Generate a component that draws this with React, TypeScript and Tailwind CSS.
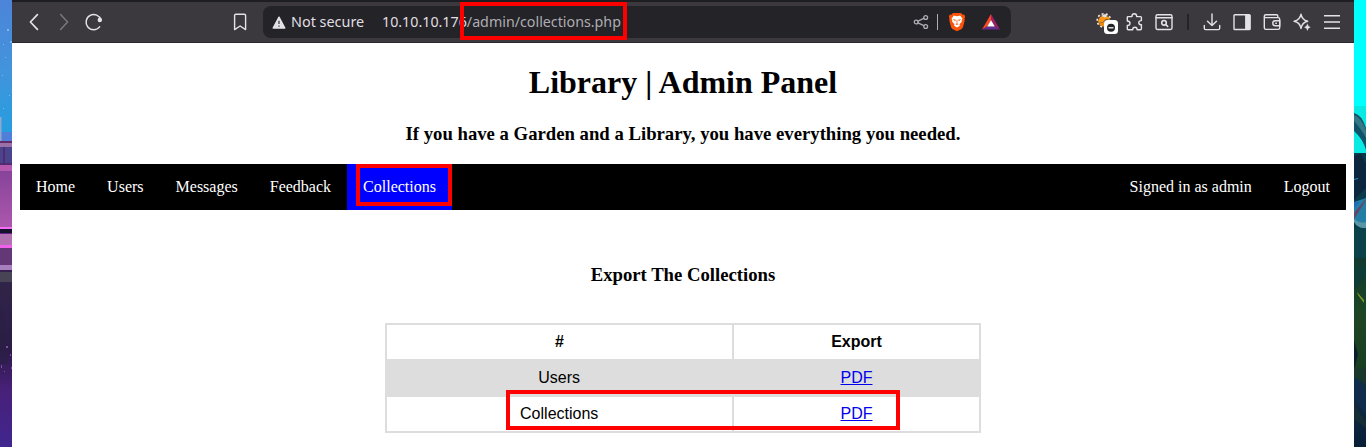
import React from "react";

const line = {
  fill: "none",
  stroke: "currentColor",
  strokeWidth: 1.4,
  strokeLinecap: "round" as const,
  strokeLinejoin: "round" as const,
};

function ToolButton({ label, className = "", color = "text-[#e3e2e6]", children }: { label: string; className?: string; color?: string; children: React.ReactNode }) {
  return (
    <button aria-label={label} className={"flex h-10 w-[30px] shrink-0 items-center justify-center " + color + " " + className}>
      <svg width="20" height="20" viewBox="0 0 20 20" {...line}>
        {children}
      </svg>
    </button>
  );
}

function ExtensionButton() {
  return (
    <button aria-label="Extension" className="flex h-10 w-[30px] shrink-0 items-center justify-end pr-px">
      <svg width="24" height="24" viewBox="0 0 24 24">
        <circle cx="10" cy="10.5" r="6.6" fill="#5d4637" />
        <circle cx="10" cy="10.5" r="6.8" fill="none" stroke="#f0eeee" strokeWidth="1.6" strokeDasharray="2 2.2" />
        <path d="M4 11l2-4 4-1 5 1 1 3-4-1-3 3-4 1z" fill="#f79516" />
        <path d="M7 6l4-2 2.5 2-2.5 1.5z" fill="#e8dfda" />
        <path d="M5 13.5l5-1.5 1 2v3l-5-1.5z" fill="#ed8b10" />
        <rect x="10" y="12" width="14" height="14" rx="3.5" fill="#fff" transform="translate(0 -2)" />
        <circle cx="17" cy="17.8" r="4" fill="#242328" />
        <path d="M14.5 17.8h5" stroke="#fff" strokeWidth="1.3" />
      </svg>
    </button>
  );
}

function BraveLogo() {
  return (
    <svg width="18" height="20" viewBox="0 0 18 20">
      <path d="M5 1h8l1.7 1.7 1.5-.1 1 2.2-.7 1.6.3 1.6-1.8 7.1-1.3 1.8L9 19.3l-4.7-2.4L3 15.1 1.2 8l.3-1.6-.7-1.6 1-2.2 1.5.1z" fill="#fb5308" />
      <path d="M5.8 3.6L9 4.3l3.2-.7 2.3 3.1-.8 1.8.1 1.3-2.3 2.4.5 1.2-1.2 1-1.8 1.2-1.8-1.2-1.2-1 .5-1.2-2.3-2.4.1-1.3-.8-1.8z" fill="#fff" />
      <path d="M4.7 7l3 .8-.5 1.5zM13.3 7l-3 .8.5 1.5zM7.4 12.1L9 11.2l1.6.9-1.6 1zM8.6 8h.8v2.8h-.8z" fill="#fb5308" />
    </svg>
  );
}

function RewardsLogo() {
  return (
    <svg width="18" height="16" viewBox="0 0 18 16">
      <path d="M9 0L0 15.5 5.2 12.5 9 6z" fill="#ff4724" />
      <path d="M9 0l9 15.5-5.2-3L9 6z" fill="#9e1f63" />
      <path d="M0 15.5h18l-5.2-3H5.2z" fill="#662d91" />
      <path d="M9 6l3.8 6.5H5.2z" fill="#fff" />
    </svg>
  );
}

function Toolbar() {
  return (
    <header className="flex h-[43px] shrink-0 border-t-2 border-b border-t-[#1e1d22] border-b-[#2a282f] bg-[#3b393e] font-['Noto_Sans',sans-serif]">
      <div className="ml-[7px] flex">
        <ToolButton label="Back"><path d="M13.4 2.6L6.4 10l7 7.4" strokeWidth="1.7" /></ToolButton>
        <ToolButton label="Forward" color="text-[#7c7a80]"><path d="M6.6 2.6l7 7.4-7 7.4" /></ToolButton>
        <ToolButton label="Reload">
          <path d="M15.6 14.9A7.6 7.6 0 1 1 17 8" strokeWidth="1.5" />
          <circle cx="15.8" cy="8" r="1.5" fill="currentColor" />
        </ToolButton>
      </div>
      <ToolButton label="Bookmark" className="ml-[116px]">
        <path d="M4.6 17.6V3.6q0-1.3 1.3-1.3h8.4q1.3 0 1.3 1.3v14L10.1 14z" strokeWidth="1.4" />
      </ToolButton>

      <div className="mt-1 ml-2 flex h-8 w-[748px] shrink-0 items-center rounded-[8px] bg-[#242328] text-[14.25px] leading-8 whitespace-nowrap">
        <svg className="ml-[9px]" width="14" height="13" viewBox="0 0 14 13">
          <path d="M7 1.2L12.8 12H1.2z" fill="#e3e2e6" stroke="#e3e2e6" strokeWidth="1.4" strokeLinejoin="round" />
          <path d="M7 4.7v3.4M7 9.4v1.4" stroke="#4a494e" strokeWidth="1.4" />
        </svg>
        <span className="ml-[5px] w-[91px] text-[14.4px] text-[#e0dfe3]">Not secure</span>
        <span className="relative text-[#e0dfe3]">
          10.10.10.176<span className="text-[#aeadb3]">/admin/collections.php</span>
          <span className="absolute top-[-4px] right-[-6px] h-[38px] w-[167px] border-4 border-[#f00]" />
        </span>
        <div className="ml-auto flex h-8 w-[98px] items-center text-[#aeadb3]">
          <svg width="16" height="16" viewBox="0 0 16 16" {...line} strokeWidth={1.3}>
            <circle cx="3.2" cy="8" r="1.9" />
            <circle cx="12.7" cy="3.5" r="1.9" />
            <circle cx="12.7" cy="12.5" r="1.9" />
            <path d="M5 7.2l5.8-2.8M5 8.8l5.8 2.8" />
          </svg>
          <span className="ml-2 h-4 w-px bg-[#aeadb3]" />
          <span className="ml-[10px]"><BraveLogo /></span>
          <span className="ml-[16px]"><RewardsLogo /></span>
        </div>
      </div>

      <div className="ml-auto flex items-center pr-[7px]">
        <ExtensionButton />
        <ToolButton label="Extensions">
          <path d="M4 4.6h4V4q0-2.2 2.3-2.2T12.6 4v.6h4q.8 0 .8.8v3.2q-2.6 0-2.6 2.1t2.6 2.1v4q0 .9-.9.9h-3.4q0-2.4-2.2-2.4t-2.2 2.4H4.2q-.9 0-.9-.9v-3.3Q6 13.4 6 11.2T3.3 9V5.3q0-.7.7-.7z" />
        </ToolButton>
        <ToolButton label="Search tabs">
          <rect x="2" y="2.8" width="16" height="14.7" rx="1.4" />
          <path d="M2 5.7h16" strokeWidth="1.6" />
          <circle cx="10" cy="10.8" r="2.3" strokeWidth="1.6" />
          <path d="M11.8 12.6l1.9 1.7" strokeWidth="1.7" />
        </ToolButton>
        <span className="mx-2 h-4 w-[2px] bg-[#242328]" />
        <ToolButton label="Downloads">
          <path d="M10 2v11.5M5.5 9.2l4.5 4.4 4.5-4.4M2.3 13.5v2.7q0 1.4 1.4 1.4h12.6q1.4 0 1.4-1.4v-2.7" />
        </ToolButton>
        <ToolButton label="Sidebar">
          <rect x="2" y="2.8" width="16" height="14.7" rx=".8" />
          <path d="M14 3h4v14.5h-4z" fill="currentColor" strokeWidth="1" />
        </ToolButton>
        <ToolButton label="Wallet">
          <path d="M2.3 4.3q0-1.6 1.6-1.6h10.7q1.2 0 1.2 1.2v1.7H3.6q-1.3 0-1.3-1.3v11.4q0 1.7 1.7 1.7h12q1.7 0 1.7-1.7V7.3q0-1.7-1.7-1.7" />
          <path d="M17.7 8.7h-4.4q-2.5 0-2.5 2.5t2.5 2.5h4.4zM13.8 11.2h.6" />
        </ToolButton>
        <ToolButton label="Assistant">
          <path d="M9 2.2Q10 8.1 15.7 9.3 10 10.5 9 16.5 8 10.5 2.1 9.3 8 8.1 9 2.2z" />
          <path d="M15.4 12.1q.5 2.7 3 3.2-2.5.5-3 3.2-.5-2.7-3-3.2 2.5-.5 3-3.2z" fill="currentColor" strokeWidth=".3" />
        </ToolButton>
        <ToolButton label="Menu"><path d="M2 3.7h16M2 10h16M2 16.3h16" strokeWidth="1.5" strokeLinecap="butt" /></ToolButton>
      </div>
    </header>
  );
}

function LeftWallpaper() {
  return (
    <svg className="shrink-0" width="12" height="447" viewBox="0 0 12 447" preserveAspectRatio="none">
      <defs>
        <linearGradient id="sky" x1="0" y1="0" x2="0" y2="1"><stop stopColor="#4c84d9" /><stop offset=".5" stopColor="#4294dc" /><stop offset="1" stopColor="#209fe0" /></linearGradient>
        <linearGradient id="wall" x1="0" y1="0" x2="0" y2="1"><stop stopColor="#87439a" /><stop offset="1" stopColor="#ab58ad" /></linearGradient>
        <linearGradient id="floor" x1="0" y1="0" x2="0" y2="1"><stop stopColor="#302548" /><stop offset=".4" stopColor="#2b1b48" /><stop offset=".65" stopColor="#482078" /><stop offset="1" stopColor="#40268f" /></linearGradient>
      </defs>
      <rect width="12" height="142" fill="url(#sky)" />
      <path d="M0 132h12v10H0z" fill="#507fda" />
      <path d="M0 117h1.5v26H0z" fill="#91a7d0" />
      <path d="M0 141h12v2H0z" fill="#632a6c" />
      <path d="M0 143h12v4H0z" fill="#9b70a6" />
      <path d="M0 147h12v18H0z" fill="#49448d" />
      <path d="M3 147h2v18H3zM0 163h12v2H0z" fill="#502b6e" />
      <path d="M0 165h12v6H0z" fill="#b859b0" />
      <rect y="171" width="12" height="56" fill="url(#wall)" />
      <path d="M0 227h12v2H0z" fill="#f66cf4" />
      <path d="M0 229h12v4H0z" fill="#14112b" />
      <path d="M0 233h12v1H0z" fill="#65208b" />
      <path d="M0 234h12v11H0z" fill="#b272b1" />
      <path d="M0 245h12v3H0z" fill="#f060e9" />
      <path d="M0 248h12v17H0z" fill="#643776" />
      <path d="M0 265h12v5H0z" fill="#a77fbe" />
      <path d="M0 270h12v2H0z" fill="#35204f" />
      <path d="M0 272h12v10H0z" fill="#484355" />
      <rect y="282" width="12" height="165" fill="url(#floor)" />
      <path d="M0 305l8 34v25H0z" fill="#2a2045" opacity=".6" />
      <path d="M7 29h2v2H7zM3 44h1v1H3zM10 41h2v2h-2zM5 57h1v1H5zM2 75h1v1H2zM9 95h1v1H9zM3 108h1v1H3z" fill="#83b9e7" />
      <path d="M6 346h2v2H6zM1 365h1v3H1zM10 354h1v2h-1zM4 371h1v1H4zM11 367h1v2h-1z" fill="#7c5294" />
    </svg>
  );
}

function RightWallpaper() {
  return (
    <svg className="shrink-0" width="12" height="447" viewBox="0 0 12 447" preserveAspectRatio="none">
      <defs>
        <linearGradient id="leaves" x1="0" y1="0" x2="0" y2="1"><stop stopColor="#12392f" /><stop offset=".3" stopColor="#1d4524" /><stop offset=".6" stopColor="#193d21" /><stop offset=".7" stopColor="#122c43" /><stop offset="1" stopColor="#071e36" /></linearGradient>
      </defs>
      <path d="M0 0h12v155H0z" fill="#0ff" />
      <path d="M0 106h12v49H0z" fill="#08eae3" />
      <path d="M0 113q8 2 12 15v22q-3-11-12-19z" fill="#105268" />
      <path d="M0 115q7 2 12 15v8q-4-8-12-17z" fill="#337884" />
      <path d="M0 153h12v105H0z" fill="#0a3b49" />
      <path d="M0 156l7-2 5 10v24l-12 12z" fill="#0c263d" />
      <path d="M0 179l4-1v1l-4 1z" fill="#2794bd" />
      <path d="M0 202l12-4v29q-7 0-12-7z" fill="#227ea5" />
      <path d="M0 213l11-13h1l-12 19z" fill="#6a4263" />
      <path d="M0 202h5l-5 7z" fill="#216aba" />
      <path d="M0 219q7 5 12 3v6q-8 1-12-6z" fill="#5796a2" />
      <path d="M0 228h12v30H0z" fill="#0b4149" />
      <rect y="258" width="12" height="189" fill="url(#leaves)" />
      <path d="M0 267h12v9L0 290z" fill="#0d3b35" />
      <path d="M3 292l7 8v3l-6-8z" fill="#7a9c25" />
      <path d="M0 340l4 14-4 17z" fill="#081f28" />
      <path d="M0 367q8 4 12 0v17q-7-8-12-8z" fill="#19372a" />
      <path d="M0 378q9 3 12 12v25L0 397z" fill="#102c4b" />
      <path d="M0 405l12 16v7l-12-9z" fill="#152d34" />
    </svg>
  );
}

function NavItem({ children, active = false }: { children: React.ReactNode; active?: boolean }) {
  return (
    <a className={"relative px-4 py-[14px] leading-[18px] " + (active ? "bg-[#00f]" : "")}>
      {children}
      {active && <span className="absolute top-0 right-0 h-[42px] w-24 border-4 border-[#f00]" />}
    </a>
  );
}

export default function App() {
  return (
    <div className="flex h-[447px] w-full overflow-hidden bg-white text-black">
      <LeftWallpaper />
      <div className="flex min-w-0 flex-1 flex-col">
        <Toolbar />
        <main className="flex flex-col px-2 font-['Liberation_Serif',serif] text-[16px]">
          <h1 className="mt-[21px] text-center text-[32px] leading-[37px] font-bold">Library | Admin Panel</h1>
          <h3 className="mt-[22px] text-center text-[18.72px] leading-[22px] font-bold">If you have a Garden and a Library, you have everything you needed.</h3>
          <nav className="mt-[19px] flex h-[46px] bg-black text-white">
            <NavItem>Home</NavItem>
            <NavItem>Users</NavItem>
            <NavItem>Messages</NavItem>
            <NavItem>Feedback</NavItem>
            <NavItem active>Collections</NavItem>
            <div className="ml-auto flex">
              <NavItem>Signed in as admin</NavItem>
              <NavItem>Logout</NavItem>
            </div>
          </nav>
          <h3 className="mt-[54px] text-center text-[18.72px] leading-[22px] font-bold">Export The Collections</h3>
          <div className="relative mx-auto mt-[37px] w-[596px] font-['Liberation_Sans',sans-serif]">
            <table className="w-full table-fixed border-collapse text-center leading-[18px] [&_td]:h-9 [&_td]:border-2 [&_td]:border-[#ddd] [&_td]:p-0 [&_th]:h-9 [&_th]:border-2 [&_th]:border-[#ddd] [&_th]:p-0">
              <colgroup>
                <col className="w-[347px]" />
                <col className="w-[247px]" />
              </colgroup>
              <thead>
                <tr><th>#</th><th>Export</th></tr>
              </thead>
              <tbody>
                <tr className="bg-[#ddd]"><td><span className="mr-[0.6px]">Users</span></td><td><a className="text-[#00e] underline">PDF</a></td></tr>
                <tr><td><span className="mr-[0.6px]">Collections</span></td><td><a className="text-[#00e] underline">PDF</a></td></tr>
              </tbody>
            </table>
            <span className="absolute top-[67px] left-[121px] h-10 w-[394px] border-4 border-[#f00]" />
          </div>
        </main>
      </div>
      <RightWallpaper />
    </div>
  );
}
